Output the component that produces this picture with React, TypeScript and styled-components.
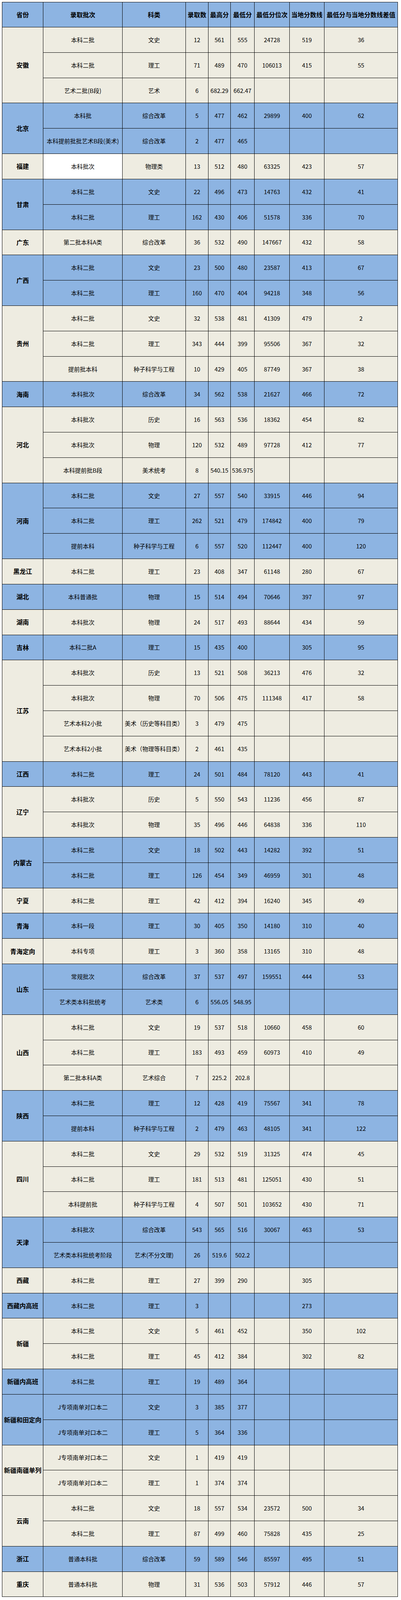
import React from 'react';
import styled, { createGlobalStyle } from 'styled-components';

const BLUE = '#8DB4E2';
const BEIGE = '#EEECE1';
const WHITE = '#FFFFFF';

/* vertical sizes are taken from the 4211px-tall reference and expressed in vh */
const GlobalStyle = createGlobalStyle`
  html, body {
    margin: 0;
    padding: 0;
    background: #ffffff;
  }
  html {
    overflow: hidden;
  }
  body {
    font-family: "Noto Sans CJK SC", "Noto Sans", "Liberation Sans", sans-serif;
    color: #000000;
  }
`;

const Page = styled.div`
  padding: 0.1187vh 0 0 5px;
`;

const Grid = styled.div`
  display: grid;
  box-sizing: border-box;
  width: 1014px;
  grid-template-columns: 105px 203px 162px 58px 57px 61px 90px 89px 188px;
  grid-template-rows: 1.5673vh;
  grid-auto-rows: 1.5827vh;
  border-top: 1px solid #000;
  border-left: 1px solid #000;
`;

const Cell = styled.div<{ $bg: string }>`
  box-sizing: border-box;
  border-right: 1px solid #000;
  border-bottom: 1px solid #000;
  background: ${(p) => p.$bg};
  display: flex;
  align-items: center;
  justify-content: center;
  text-align: center;
  font-size: 15px;
  line-height: 1.2;
  white-space: nowrap;
  overflow: visible;
  color: #000;
`;

const HeadCell = styled(Cell)`
  font-size: 16px;
  font-weight: 700;
`;

const ProvinceCell = styled(Cell)<{ $span: number }>`
  grid-column: 1;
  grid-row: span ${(p) => p.$span};
  font-size: 16px;
  font-weight: 700;
`;

type Row = {
  cells: string[];
  batchBg?: string;
};

type Group = {
  name: string;
  bg: string;
  rows: Row[];
};

const r = (cells: string[], batchBg?: string): Row => ({ cells, batchBg });

const HEADERS = [
  '省份',
  '录取批次',
  '科类',
  '录取数',
  '最高分',
  '最低分',
  '最低分位次',
  '当地分数线',
  '最低分与当地分数线差值',
];

const DATA: Group[] = [
  {
    name: '安徽',
    bg: BEIGE,
    rows: [
      r(['本科二批', '文史', '12', '561', '555', '24728', '519', '36']),
      r(['本科二批', '理工', '71', '489', '470', '106013', '415', '55']),
      r(['艺术二批(B段)', '艺术', '6', '682.29', '662.47', '', '', '']),
    ],
  },
  {
    name: '北京',
    bg: BLUE,
    rows: [
      r(['本科批', '综合改革', '5', '477', '462', '29899', '400', '62']),
      r(['本科提前批批艺术B段(美术)', '综合改革', '2', '477', '465', '', '', '']),
    ],
  },
  {
    name: '福建',
    bg: BEIGE,
    rows: [r(['本科批次', '物理类', '13', '512', '480', '63325', '423', '57'], WHITE)],
  },
  {
    name: '甘肃',
    bg: BLUE,
    rows: [
      r(['本科二批', '文史', '22', '496', '473', '14763', '432', '41']),
      r(['本科二批', '理工', '162', '430', '406', '51578', '336', '70']),
    ],
  },
  {
    name: '广东',
    bg: BEIGE,
    rows: [r(['第二批本科A类', '综合改革', '36', '532', '490', '147667', '432', '58'])],
  },
  {
    name: '广西',
    bg: BLUE,
    rows: [
      r(['本科二批', '文史', '23', '500', '480', '23587', '413', '67']),
      r(['本科二批', '理工', '160', '470', '404', '94218', '348', '56']),
    ],
  },
  {
    name: '贵州',
    bg: BEIGE,
    rows: [
      r(['本科二批', '文史', '32', '538', '481', '41309', '479', '2']),
      r(['本科二批', '理工', '343', '444', '399', '95506', '367', '32']),
      r(['提前批本科', '种子科学与工程', '10', '429', '405', '87749', '367', '38']),
    ],
  },
  {
    name: '海南',
    bg: BLUE,
    rows: [r(['本科批次', '综合改革', '34', '562', '538', '21627', '466', '72'])],
  },
  {
    name: '河北',
    bg: BEIGE,
    rows: [
      r(['本科批次', '历史', '16', '563', '536', '18362', '454', '82']),
      r(['本科批次', '物理', '120', '532', '489', '97728', '412', '77']),
      r(['本科提前批B段', '美术统考', '8', '540.15', '536.975', '', '', '']),
    ],
  },
  {
    name: '河南',
    bg: BLUE,
    rows: [
      r(['本科二批', '文史', '27', '557', '540', '33915', '446', '94']),
      r(['本科二批', '理工', '262', '521', '479', '174842', '400', '79']),
      r(['提前本科', '种子科学与工程', '6', '557', '520', '112447', '400', '120']),
    ],
  },
  {
    name: '黑龙江',
    bg: BEIGE,
    rows: [r(['本科二批', '理工', '23', '408', '347', '61148', '280', '67'])],
  },
  {
    name: '湖北',
    bg: BLUE,
    rows: [r(['本科普通批', '物理', '15', '514', '494', '70646', '397', '97'])],
  },
  {
    name: '湖南',
    bg: BEIGE,
    rows: [r(['本科批次', '物理', '24', '517', '493', '88644', '434', '59'])],
  },
  {
    name: '吉林',
    bg: BLUE,
    rows: [r(['本科二批A', '理工', '15', '435', '400', '', '305', '95'])],
  },
  {
    name: '江苏',
    bg: BEIGE,
    rows: [
      r(['本科批次', '历史', '13', '521', '508', '36213', '476', '32']),
      r(['本科批次', '物理', '70', '506', '475', '111348', '417', '58']),
      r(['艺术本科2小批', '美术（历史等科目类）', '3', '479', '475', '', '', '']),
      r(['艺术本科2小批', '美术（物理等科目类）', '2', '461', '435', '', '', '']),
    ],
  },
  {
    name: '江西',
    bg: BLUE,
    rows: [r(['本科二批', '理工', '24', '501', '484', '78120', '443', '41'])],
  },
  {
    name: '辽宁',
    bg: BEIGE,
    rows: [
      r(['本科批次', '历史', '5', '550', '543', '11236', '456', '87']),
      r(['本科批次', '物理', '35', '496', '446', '64838', '336', '110']),
    ],
  },
  {
    name: '内蒙古',
    bg: BLUE,
    rows: [
      r(['本科二批', '文史', '18', '502', '443', '14282', '392', '51']),
      r(['本科二批', '理工', '126', '454', '349', '46959', '301', '48']),
    ],
  },
  {
    name: '宁夏',
    bg: BEIGE,
    rows: [r(['本科二批', '理工', '42', '412', '394', '16240', '345', '49'])],
  },
  {
    name: '青海',
    bg: BLUE,
    rows: [r(['本科一段', '理工', '30', '405', '350', '14180', '310', '40'])],
  },
  {
    name: '青海定向',
    bg: BEIGE,
    rows: [r(['本科专项', '理工', '3', '360', '358', '13165', '310', '48'])],
  },
  {
    name: '山东',
    bg: BLUE,
    rows: [
      r(['常规批次', '综合改革', '37', '537', '497', '159551', '444', '53']),
      r(['艺术类本科批统考', '艺术类', '6', '556.05', '548.95', '', '', '']),
    ],
  },
  {
    name: '山西',
    bg: BEIGE,
    rows: [
      r(['本科二批', '文史', '19', '537', '518', '10660', '458', '60']),
      r(['本科二批', '理工', '183', '493', '459', '60973', '410', '49']),
      r(['第二批本科A类', '艺术综合', '7', '225.2', '202.8', '', '', '']),
    ],
  },
  {
    name: '陕西',
    bg: BLUE,
    rows: [
      r(['本科二批', '理工', '12', '428', '419', '75567', '341', '78']),
      r(['提前本科', '种子科学与工程', '2', '479', '463', '48105', '341', '122']),
    ],
  },
  {
    name: '四川',
    bg: BEIGE,
    rows: [
      r(['本科二批', '文史', '29', '532', '519', '31325', '474', '45']),
      r(['本科二批', '理工', '181', '513', '481', '125051', '430', '51']),
      r(['本科提前批', '种子科学与工程', '4', '507', '501', '103652', '430', '71']),
    ],
  },
  {
    name: '天津',
    bg: BLUE,
    rows: [
      r(['本科批次', '综合改革', '543', '565', '516', '30067', '463', '53']),
      r(['艺术类本科批统考阶段', '艺术(不分文理)', '26', '519.6', '502.2', '', '', '']),
    ],
  },
  {
    name: '西藏',
    bg: BEIGE,
    rows: [r(['本科二批', '理工', '27', '399', '290', '', '305', ''])],
  },
  {
    name: '西藏内高班',
    bg: BLUE,
    rows: [r(['本科二批', '理工', '3', '', '', '', '273', ''])],
  },
  {
    name: '新疆',
    bg: BEIGE,
    rows: [
      r(['本科二批', '文史', '5', '461', '452', '', '350', '102']),
      r(['本科二批', '理工', '45', '412', '384', '', '302', '82']),
    ],
  },
  {
    name: '新疆内高班',
    bg: BLUE,
    rows: [r(['本科二批', '理工', '19', '489', '364', '', '', ''])],
  },
  {
    name: '新疆和田定向',
    bg: BLUE,
    rows: [
      r(['J专项南单对口本二', '文史', '3', '385', '377', '', '', '']),
      r(['J专项南单对口本二', '理工', '5', '364', '336', '', '', '']),
    ],
  },
  {
    name: '新疆南疆单列',
    bg: BEIGE,
    rows: [
      r(['J专项南单对口本二', '文史', '1', '419', '419', '', '', '']),
      r(['J专项南单对口本二', '理工', '1', '374', '374', '', '', '']),
    ],
  },
  {
    name: '云南',
    bg: BEIGE,
    rows: [
      r(['本科二批', '文史', '18', '557', '534', '23572', '500', '34']),
      r(['本科二批', '理工', '87', '499', '460', '75828', '435', '25']),
    ],
  },
  {
    name: '浙江',
    bg: BLUE,
    rows: [r(['普通本科批', '综合改革', '59', '589', '546', '85597', '495', '51'])],
  },
  {
    name: '重庆',
    bg: BEIGE,
    rows: [r(['普通本科批', '物理', '31', '536', '503', '57912', '446', '57'])],
  },
];

export default function App() {
  return (
    <Page>
      <GlobalStyle />
      <Grid>
        {HEADERS.map((h) => (
          <HeadCell key={h} $bg={BLUE}>
            {h}
          </HeadCell>
        ))}
        {DATA.map((g) => (
          <React.Fragment key={g.name}>
            <ProvinceCell $bg={g.bg} $span={g.rows.length}>
              {g.name}
            </ProvinceCell>
            {g.rows.map((row, ri) =>
              row.cells.map((c, ci) => (
                <Cell
                  key={`${g.name}-${ri}-${ci}`}
                  $bg={ci === 0 && row.batchBg ? row.batchBg : g.bg}
                >
                  {c}
                </Cell>
              ))
            )}
          </React.Fragment>
        ))}
      </Grid>
    </Page>
  );
}
